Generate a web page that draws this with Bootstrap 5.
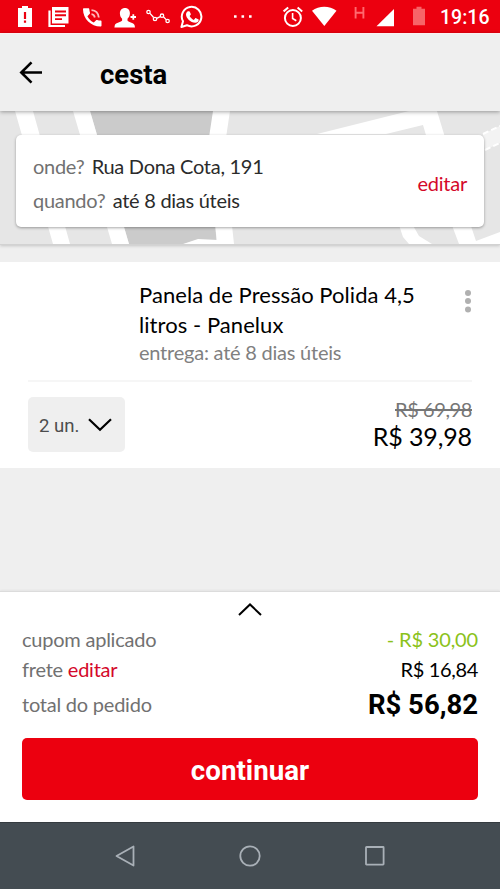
<!DOCTYPE html>
<html lang="pt-BR">
<head>
<meta charset="utf-8">
<meta name="viewport" content="width=device-width, initial-scale=1">
<title>cesta</title>
<link href="https://cdn.jsdelivr.net/npm/bootstrap@5.3.0/dist/css/bootstrap.min.css" rel="stylesheet">
<style>
  body { font-family: Lato, "Liberation Sans", sans-serif; font-size: 20px; line-height: 30px; letter-spacing: -.23px; background: #efefef; color: #000; height: 889px; overflow: hidden; }
  svg { display: block; flex: none; }
  .roboto { font-family: Roboto, "Liberation Sans", sans-serif; letter-spacing: 0; }
  .status-bar { height: 33px; background: #ec000f; color: #fff; padding: 0 11px 0 18px; }
  .status-bar .gap-a { margin-left: 16px; }
  .status-bar .gap-b { margin-left: 14px; }
  .status-bar .gap-c { margin-left: 12px; }
  .status-bar .gap-d { margin-left: 10px; }
  .status-bar .gap-e { margin-left: 9px; }
  .status-bar .gap-f { margin-left: 31px; }
  .status-bar .gap-g { margin-left: 17px; }
  .status-bar .gap-h { margin-left: 19px; }
  .clock { font-size: 19.500px; font-weight: 500; line-height: 33px; margin-left: 15px; padding-top: 2px; white-space: nowrap; }
  .app-bar { height: 78px; background: #efefef; padding: 0 19px; box-shadow: 0 1px 4px rgba(0,0,0,.35); z-index: 2; border-top: 1px solid #fbeff0; }
  .app-title { font-size: 27.500px; font-weight: 700; margin-left: 57px; padding-top: 3px; }
  .map-area { height: 134px; padding: 24px 16px 0; background: #e6e6e6; border-bottom: 1px solid #d2d2d2; box-shadow: 0 1px 3px rgba(0,0,0,.18); }
  .map-art { left: 0; top: 0; }
  .address { height: 92px; padding: 14px 17px 0; border-radius: 5px; box-shadow: 0 1px 3px rgba(0,0,0,.35); line-height: 34px; }
  .where { letter-spacing: -.28px; }
  .where .value-text { margin-left: 2.500px; }
  .label-text { color: #717171; }
  .value-text { color: #2b2b2b; }
  .brand-text { color: #d4082a; text-decoration: none; }
  .edit-link { margin-top: 17px; }
  .product { margin-top: 17px; height: 206px; padding: 0 28px; }
  .product-info { height: 120px; padding: 18px 0 0 111px; border-bottom: 2px solid #f6f6f6; }
  .product-name { font-size: 22px; line-height: 30px; letter-spacing: .06px; margin: 0; font-weight: 400; }
  .delivery { color: #808080; line-height: 25px; }
  .qty { width: 97px; height: 55px; margin-top: 15px; border: 0; border-radius: 5px; background: #efefef; color: #4d4d4d; font-size: 18.600px; padding: 2px 13px 0 11px; }
  .qty svg { margin-top: -2px; }
  .prices { padding-top: 14px; }
  .old-price { font-size: 20px; line-height: 27px; letter-spacing: -.4px; color: #767676; }
  .price { font-size: 25px; line-height: 27px; letter-spacing: -.12px; }
  .summary { margin-top: 123px; height: 231px; padding: 11px 22px 0; border-top: 1px solid #dcdcdc; box-shadow: 0 -1px 2px rgba(0,0,0,.05); }
  .rows { margin-top: 8px; }
  .total-row { padding-top: 5px; }
  .amount { letter-spacing: -.35px; }
  .green { color: #8bc21a; letter-spacing: -.15px; }
  .total { font-size: 27.500px; font-weight: 700; padding-top: 1px; }
  .go { height: 62px; margin-top: 18px; border: 0; border-radius: 5px; background: #ec000f; color: #fff; font-size: 27.700px; font-weight: 700; padding: 3px 0 0; }
  .system-nav { height: 67px; background: #444c52; border-top: 1px solid #353b40; padding: 0 115px; }
</style>
</head>
<body class="d-flex flex-column">
<header class="status-bar d-flex align-items-center flex-shrink-0">
  <svg width="14" height="33" viewBox="18 0 14 33"><path fill="#fff" d="M22 6h6v2h4v19H18V8h4z"/><path stroke="#ec000f" stroke-width="2.2" d="M25 12v7M25 20.5v2.2"/></svg>
  <svg class="gap-a" width="21" height="33" viewBox="48 0 21 33"><path fill="#fff" d="M52 7h16.500v16.500H52z"/><path fill="none" stroke="#fff" stroke-width="2.200" d="M49.500 10.500V26H65"/><path stroke="#ec000f" stroke-width="1.900" d="M55 11.500h11M55 15.300h11M55 19.100h7"/></svg>
  <svg class="gap-b" width="19" height="33" viewBox="83 0 19 33"><path fill="#fff" d="M84 8.200h4.300c.7 0 .9.300 1 1 .1 1.300.3 2.400.7 3.500.1.400 0 .8-.2 1.100l-2.400 2.400c1.500 2.900 3.700 5 6.400 6.400l2.300-2.400c.3-.3.700-.3 1.100-.2 1.100.4 2.200.5 3.300.6.700 0 1 .3 1 1v4c0 .6-.4 1-1 1C91 26.600 83 18.600 83 9.200c0-.6.400-1 1-1z"/><path fill="none" stroke="#ffb9bc" stroke-width="1.800" d="M91.500 14.200c2 .2 3 1.400 3.300 3.300M91.500 10.200c4 .3 6.800 3 7.300 7.300"/></svg>
  <svg class="gap-c" width="22" height="33" viewBox="114 0 22 33"><path fill="#fff" d="M125 8c3 0 5 2.200 4.900 5.400-.1 2.600-1.200 4.200-2.400 5.300v1.700c.3 1.600 6.300 1.800 7.100 4.900l.4 2.200h-20.600l.4-2.200c.8-3.100 6.800-3.300 7.300-4.900v-1.700c-1.200-1.100-2.100-2.700-2.200-5.300C119.800 10.200 122 8 125 8z"/><path stroke="#fff" stroke-width="1.800" d="M130.500 17h5.500M133.300 14.200v5.600"/></svg>
  <svg class="gap-d" width="25" height="33" viewBox="146 0 25 33"><g fill="none" stroke="#fff" stroke-width="1.300"><path d="M150 13.300l3.600 4.200M156.700 18.400l3.600-1.800M163.600 17l2.600 2.600"/><circle cx="148.500" cy="12" r="1.700"/><circle cx="155" cy="19" r="1.700"/><circle cx="162" cy="15.700" r="1.700"/><circle cx="167.600" cy="21" r="1.700"/></g></svg>
  <svg class="gap-e" width="23" height="33" viewBox="180 0 23 33"><path fill="none" stroke="#fff" stroke-width="2" stroke-linejoin="round" d="M181.400 27l1.600-5.700a9.800 9.800 0 1 1 3.900 3.900z"/><path fill="#fff" d="M187.900 11.300h1.200c.4 0 .6.200.8.600l.9 2.100c.1.400 0 .7-.3 1l-.9 1.100c1 1.900 2.400 3 4.200 3.800l1.300-1.500c.3-.3.600-.4 1-.2l2.100 1c.4.200.5.400.5.700-.1 1.800-1.600 2.800-3.300 2.800-5 0-9.400-4.900-9.400-8.300 0-1.300.9-2.600 1.900-3.100z"/></svg>
  <svg class="gap-f" width="18" height="33" viewBox="234 0 18 33"><path fill="#fff" d="M234 15.200h2.600v2.600H234zM241.500 15.200h2.600v2.600h-2.600zM249 15.200h2.600v2.600H249z"/></svg>
  <svg class="gap-f" width="20" height="33" viewBox="283 0 20 33"><g fill="none" stroke="#fff" stroke-width="2"><circle cx="292.900" cy="18" r="8"/><path d="M283.600 11.400l4.600-3.900M302.200 11.400l-4.600-3.900"/><path stroke-width="1.600" d="M292.600 13v5.500l3.700 2.300"/></g></svg>
  <svg class="gap-e" width="25" height="33" viewBox="312 0 25 33"><path fill="#fff" d="M312 10.700c7-5.200 17.500-5.200 24.500 0L324.300 26z"/></svg>
  <svg class="gap-g" width="12" height="33" viewBox="354 0 12 33"><path fill="none" stroke="#ff696f" stroke-width="1.900" d="M355.600 7v11.500M363.400 7v11.500M355.600 12.800h7.800"/></svg>
  <svg class="gap-d" width="18" height="33" viewBox="376 0 18 33"><path fill="#fff" d="M394 9v17.300h-17.500z"/></svg>
  <svg class="gap-h" width="12" height="33" viewBox="413 0 12 33"><path fill="#f76468" d="M416.500 6.700h5v2h3.500v16.500h-12V8.700h3.500z"/></svg>
  <span class="clock roboto">19:16</span>
</header>

<nav class="app-bar d-flex align-items-center flex-shrink-0 position-relative">
  <svg width="24" height="24" viewBox="0 0 24 24"><path fill="none" stroke="#000" stroke-width="2.600" d="M23 11.500H3M12.500 1.300L2.300 11.500l10.200 10.200"/></svg>
  <h1 class="app-title roboto mb-0">cesta</h1>
</nav>

<section class="map-area position-relative flex-shrink-0">
  <svg class="map-art position-absolute" width="500" height="133" viewBox="0 111 500 133">
    <path fill="#cbcbcb" d="M90 111h124l-5 60 8 73h-88z"/>
    <path fill="#fff" d="M15 111h18l37 133H53zM73 111h17l39 133h-17zM213 111h17l-6 40 10 93h-17l-9-100zM183 244l15-5 20 1v4zM317 134l92-23h28l10 33-19-2-5-17-37 9zM398 222l5 15 6 7h23l-13-8-8-14zM450 220h19l7 21 24-9v12h-41z"/>
    <path fill="#f3f3f3" d="M483 134l17-8v17l-15 7z"/>
    <path fill="none" stroke="#fff" stroke-width="2" stroke-dasharray="6 3" d="M483 134l17-8M485 150l15-7"/>
  </svg>
  <div class="address bg-white position-relative d-flex justify-content-between">
    <div class="where">
      <div><span class="label-text">onde?</span> <span class="value-text">Rua Dona Cota, 191</span></div>
      <div><span class="label-text">quando?</span> <span class="value-text">até 8 dias úteis</span></div>
    </div>
    <a class="brand-text edit-link align-self-start" href="#">editar</a>
  </div>
</section>

<main class="product bg-white flex-shrink-0">
  <div class="product-info d-flex justify-content-between">
    <div>
      <h2 class="product-name">Panela de Pressão Polida 4,5<br>litros - Panelux</h2>
      <div class="delivery">entrega: até 8 dias úteis</div>
    </div>
    <svg class="mt-2" width="8" height="26" viewBox="0 0 8 26" fill="#b0b0b0"><circle cx="4" cy="5" r="3"/><circle cx="4" cy="13" r="3"/><circle cx="4" cy="21.500" r="3"/></svg>
  </div>
  <div class="d-flex justify-content-between">
    <button class="qty roboto d-flex align-items-center justify-content-between" type="button">2 un.
      <svg width="24" height="14" viewBox="0 0 24 14"><path fill="none" stroke="#000" stroke-width="2.200" d="M1 1.200l11 10.600L23 1.200"/></svg>
    </button>
    <div class="prices text-end">
      <div class="old-price text-decoration-line-through">R$ 69,98</div>
      <div class="price">R$ 39,98</div>
    </div>
  </div>
</main>

<section class="summary bg-white flex-shrink-0">
  <svg class="mx-auto" width="24" height="13" viewBox="0 0 24 13"><path fill="none" stroke="#000" stroke-width="2" d="M1 12L12 1.500 23 12"/></svg>
  <div class="rows">
    <div class="d-flex justify-content-between"><span class="label-text">cupom aplicado</span><span class="green">- R$ 30,00</span></div>
    <div class="d-flex justify-content-between"><span class="label-text">frete <a class="brand-text" href="#">editar</a></span><span class="amount">R$ 16,84</span></div>
    <div class="total-row d-flex justify-content-between"><span class="label-text">total do pedido</span><span class="total roboto">R$ 56,82</span></div>
  </div>
  <button class="go roboto w-100" type="button">continuar</button>
</section>

<footer class="system-nav d-flex align-items-center justify-content-between flex-shrink-0">
  <svg width="20" height="22" viewBox="0 0 20 22"><path fill="none" stroke="#a9b0b7" stroke-width="1.800" stroke-linejoin="round" d="M18.500 1.500v19L1.500 11z"/></svg>
  <svg width="22" height="22" viewBox="0 0 22 22"><circle cx="11" cy="11" r="9.700" fill="none" stroke="#a9b0b7" stroke-width="1.800"/></svg>
  <svg width="20" height="20" viewBox="0 0 20 20"><rect x="1" y="1" width="17.600" height="17.600" rx=".5" fill="none" stroke="#a9b0b7" stroke-width="1.800"/></svg>
</footer>
<script src="https://cdn.jsdelivr.net/npm/bootstrap@5.3.0/dist/js/bootstrap.bundle.min.js"></script>
</body>
</html>
